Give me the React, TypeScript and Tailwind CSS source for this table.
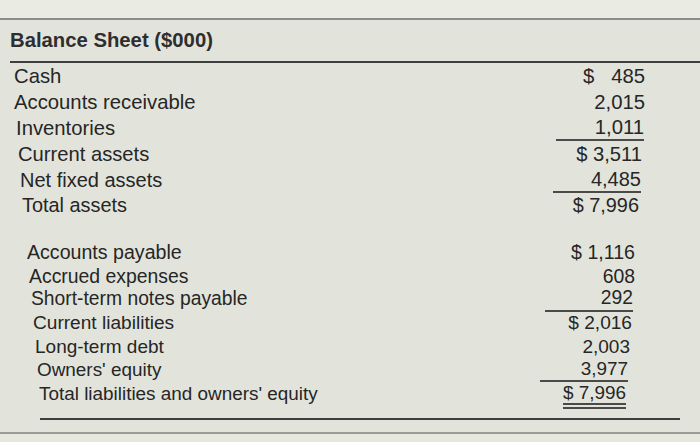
import React from "react";

type Row = {
  label: string;
  value: string;
  pl: string;
  mr: string;
  fs: string;
  rule?: boolean;
  dbl?: boolean;
};

const assets: Row[] = [
  { label: "Cash", value: "$ \u2007485", pl: "pl-[14px]", mr: "mr-[55px]", fs: "text-[20.3px]" },
  { label: "Accounts receivable", value: "2,015", pl: "pl-[14px]", mr: "mr-[55px]", fs: "text-[20.3px]" },
  { label: "Inventories", value: "1,011", pl: "pl-[16px]", mr: "mr-[56px]", fs: "text-[20.3px]", rule: true },
  { label: "Current assets", value: "$ 3,511", pl: "pl-[18px]", mr: "mr-[58px]", fs: "text-[20.2px]" },
  { label: "Net fixed assets", value: "4,485", pl: "pl-[20px]", mr: "mr-[59px]", fs: "text-[20px]", rule: true },
  { label: "Total assets", value: "$ 7,996", pl: "pl-[22px]", mr: "mr-[61px]", fs: "text-[19.9px]" },
];

const liabilities: Row[] = [
  { label: "Accounts payable", value: "$ 1,116", pl: "pl-[27px]", mr: "mr-[65px]", fs: "text-[19.6px]" },
  { label: "Accrued expenses", value: "608", pl: "pl-[29px]", mr: "mr-[65px]", fs: "text-[19.4px]" },
  { label: "Short-term notes payable", value: "292", pl: "pl-[31px]", mr: "mr-[67px]", fs: "text-[19.3px]", rule: true },
  { label: "Current liabilities", value: "$ 2,016", pl: "pl-[33px]", mr: "mr-[68px]", fs: "text-[19.1px]" },
  { label: "Long-term debt", value: "2,003", pl: "pl-[35px]", mr: "mr-[70px]", fs: "text-[19px]" },
  { label: "Owners' equity", value: "3,977", pl: "pl-[37px]", mr: "mr-[72px]", fs: "text-[18.9px]", rule: true },
  { label: "Total liabilities and owners' equity", value: "$ 7,996", pl: "pl-[39px]", mr: "mr-[74px]", fs: "text-[18.9px]", dbl: true },
];

function Line({ row, h }: { row: Row; h: string }) {
  return (
    <div className={`flex items-center ${h} ${row.fs}`}>
      <div className={`flex-1 whitespace-nowrap ${row.pl}`}>{row.label}</div>
      <div
        className={`w-[88px] ${h} flex items-center justify-end ${row.mr} ${
          row.rule ? "border-b-2 border-[#4a4a48]" : ""
        }`}
      >
        {row.dbl ? (
          <span className="inline-block leading-[20px] border-b-[6px] border-double border-[#4a4a48] mt-[4px]">
            {row.value}
          </span>
        ) : (
          <span className="whitespace-pre">{row.value}</span>
        )}
      </div>
    </div>
  );
}

export default function App() {
  return (
    <div
      className="w-[700px] h-[442px] overflow-hidden bg-[#e2e4db] text-[#262626] flex flex-col"
      style={{ fontFamily: '"Liberation Sans", Arial, sans-serif' }}
    >
      <div className="h-[20px] shrink-0 bg-[#eaece4] border-b-2 border-[#8c8c88]" />
      <div className="h-[41px] shrink-0 flex items-center pl-[10px] font-bold text-[20.3px] text-[#2e2e30]">
        Balance Sheet ($000)
      </div>
      <div className="ml-[10px] h-[2px] shrink-0 bg-[#3e3e3e]" />
      <div className="flex flex-col shrink-0">
        {assets.map((r) => (
          <Line key={r.label} row={r} h="h-[26px]" />
        ))}
      </div>
      <div className="h-[22px] shrink-0" />
      <div className="flex flex-col shrink-0">
        {liabilities.map((r) => (
          <Line key={r.label} row={r} h="h-[23.5px]" />
        ))}
      </div>
      <div className="h-[12.5px] shrink-0" />
      <div className="ml-[40px] mr-[20px] h-[2px] shrink-0 bg-[#3e3e3e]" />
      <div className="h-[12px] shrink-0" />
      <div className="w-full h-[2px] shrink-0 bg-[#9a9a96]" />
      <div className="flex-1 bg-[#e6e8e0]" />
    </div>
  );
}
